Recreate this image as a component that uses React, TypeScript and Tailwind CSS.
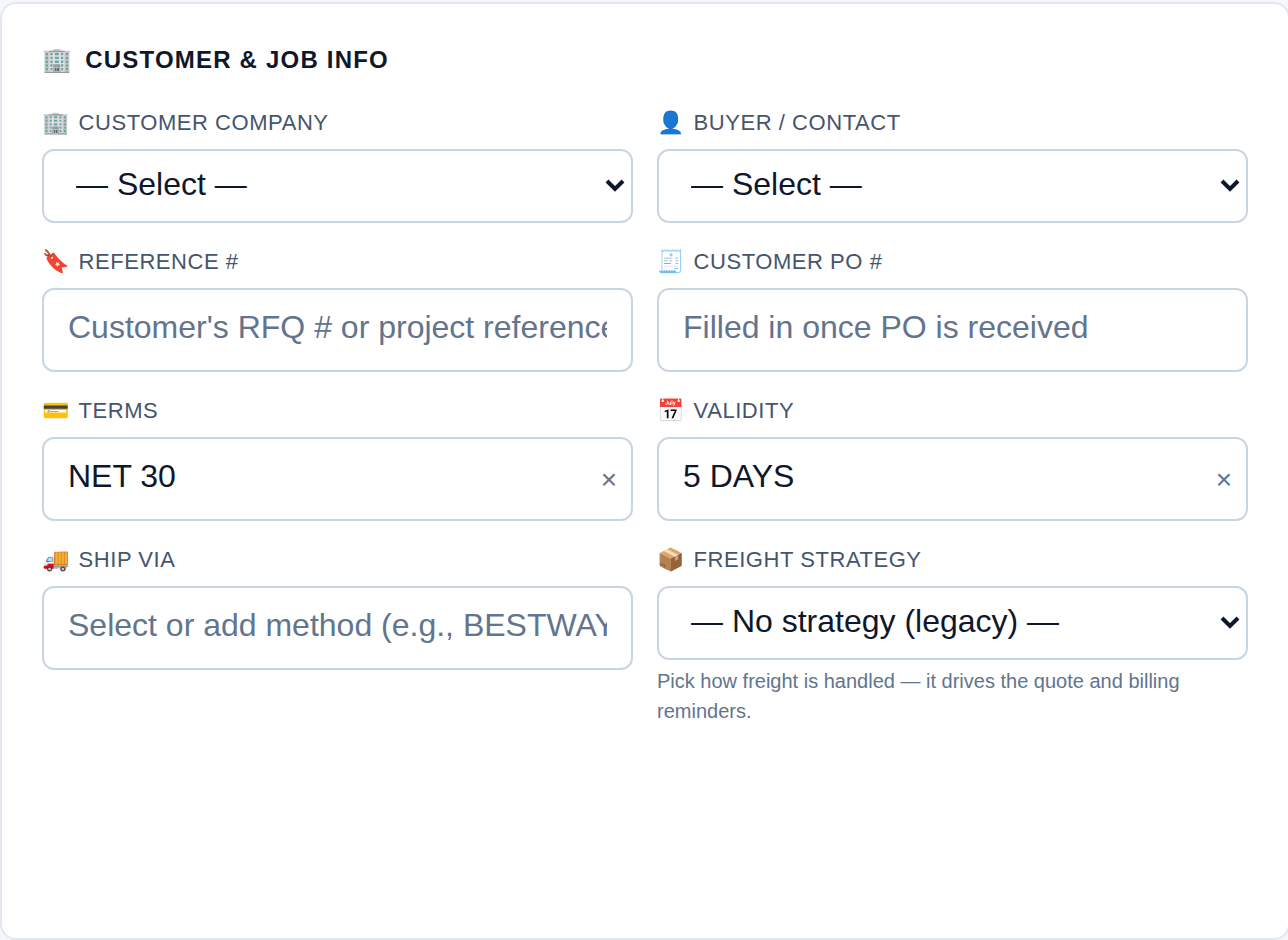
import React from 'react';

interface FieldProps {
  id: string;
  icon: string;
  label: string;
  children: React.ReactNode;
}

const boxClass =
  'block w-full rounded-xl border-2 border-slate-300 bg-white text-[32px] text-slate-900 placeholder:text-slate-500';

const Field: React.FC<FieldProps> = ({ id, icon, label, children }) => (
  <div className="min-w-0">
    <label
      htmlFor={id}
      className="mb-[13px] flex h-7 items-center gap-[9px] text-[22px] tracking-wide text-slate-600 uppercase"
    >
      <span aria-hidden="true">{icon}</span>
      {label}
    </label>
    {children}
  </div>
);

const SelectBox: React.FC<{ id: string; placeholder: string }> = ({ id, placeholder }) => (
  <div className="relative">
    <select id={id} className={`${boxClass} h-[74px] appearance-none pr-12 pb-1 pl-8`}>
      <option>{placeholder}</option>
    </select>
    <svg
      viewBox="0 0 24 24"
      fill="none"
      stroke="currentColor"
      strokeWidth={4}
      className="pointer-events-none absolute top-6 right-1.5 h-6 w-6 text-slate-900"
    >
      <path d="M4 8l8 8 8-8" />
    </svg>
  </div>
);

interface TextBoxProps {
  id: string;
  placeholder?: string;
  value?: string;
}

const TextBox: React.FC<TextBoxProps> = ({ id, placeholder, value }) => (
  <div className="relative">
    <input
      id={id}
      type="text"
      placeholder={placeholder}
      defaultValue={value}
      className={`${boxClass} h-[84px] px-6 pb-1.5`}
    />
    {value && (
      <button
        type="button"
        aria-label="Clear"
        className="absolute inset-y-0 right-4 pt-0.5 text-[28px] text-slate-500"
      >
        ×
      </button>
    )}
  </div>
);

export default function App() {
  return (
    <div className="min-h-screen overflow-x-hidden bg-[#f5f7fa] pt-0.5 font-['Liberation_Sans',Arial,sans-serif]">
      <section className="-mr-0.5 min-h-[938px] rounded-2xl border-2 border-slate-200 bg-white px-10 pt-10">
        <h2 className="mb-8 flex h-8 items-center gap-3 text-2xl font-bold tracking-wider text-slate-900 uppercase">
          <span aria-hidden="true">🏢</span>
          Customer &amp; Job Info
        </h2>
        <div className="grid grid-cols-2 gap-6">
          <Field id="company" icon="🏢" label="Customer Company">
            <SelectBox id="company" placeholder="— Select —" />
          </Field>
          <Field id="buyer" icon="👤" label="Buyer / Contact">
            <SelectBox id="buyer" placeholder="— Select —" />
          </Field>
          <Field id="reference" icon="🔖" label="Reference #">
            <TextBox id="reference" placeholder="Customer's RFQ # or project reference" />
          </Field>
          <Field id="po" icon="🧾" label="Customer PO #">
            <TextBox id="po" placeholder="Filled in once PO is received" />
          </Field>
          <Field id="terms" icon="💳" label="Terms">
            <TextBox id="terms" value="NET 30" />
          </Field>
          <Field id="validity" icon="📅" label="Validity">
            <TextBox id="validity" value="5 DAYS" />
          </Field>
          <Field id="ship" icon="🚚" label="Ship Via">
            <TextBox id="ship" placeholder="Select or add method (e.g., BESTWAY)" />
          </Field>
          <Field id="freight" icon="📦" label="Freight Strategy">
            <SelectBox id="freight" placeholder="— No strategy (legacy) —" />
            <p className="mt-1.5 text-xl leading-[30px] text-slate-500">
              Pick how freight is handled — it drives the quote and billing reminders.
            </p>
          </Field>
        </div>
      </section>
    </div>
  );
}
